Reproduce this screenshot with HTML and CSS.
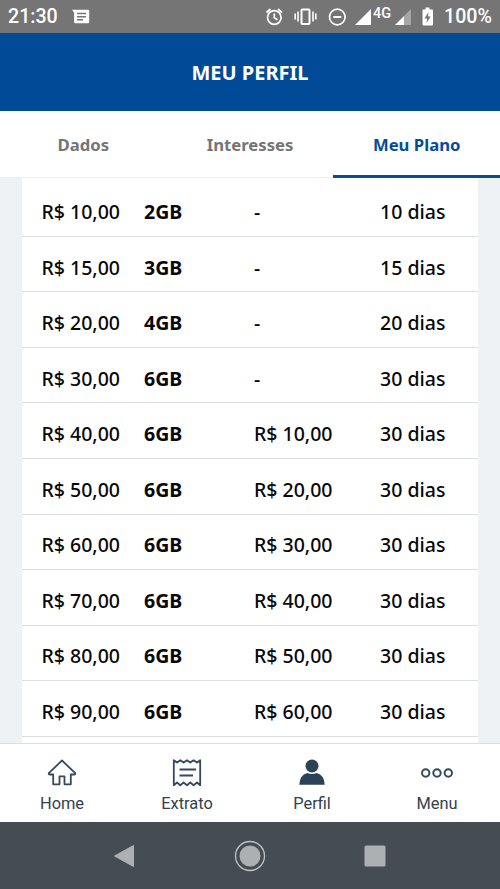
FILE: index.html
```html
<!DOCTYPE html>
<html lang="pt-BR">
<head>
<meta charset="utf-8">
<title>Meu Perfil</title>
<link rel="stylesheet" href="styles.css">
</head>
<body>
<div class="status">
  <span class="clock">21:30</span>
  <svg class="msg" width="18" height="16" viewBox="0 0 18 16"><path fill="#fff" d="M0 .7h16q1.200 0 1.200 1.200v11.200q0 1.200-1.200 1.200H3.300q-1.200 0-1.200-1.200V3.500z"/><path stroke="#757575" stroke-width="1.500" d="M5 4.500h9M5 7.700h9M5 10.800h6"/></svg>
  <svg class="icons" width="150" height="24" viewBox="0 0 150 24">
    <g fill="none" stroke="#fff" stroke-width="1.700">
      <circle cx="10.300" cy="12.500" r="6.800"/><path d="M2.500 7.500 6.500 4M18 7.500 14 4M10.300 8.500v4.300l3.200 2"/>
      <rect x="37.500" y="4.500" width="8" height="14.500" rx=".8" stroke-width="2"/><path d="M34 6.500v10M49 6.500v10M31.200 8.500v6M51.800 8.500v6" stroke-width="1.600"/>
      <circle cx="73.300" cy="12" r="7.800"/><path d="M69.300 12h8" stroke-width="2"/>
    </g>
    <path fill="#fff" d="M91 20 107 4v16zM131 20l9-9v9z"/><path fill="#a6a6a6" d="m140 11 7-7v16h-7z"/>
  </svg>
  <span class="net">4G</span>
  <svg class="battery" width="12" height="20" viewBox="0 0 12 20"><path fill="#fff" d="M3.500.5h4v2H10q1 0 1 1v14q0 1-1 1H1.500q-1 0-1-1v-14q0-1 1-1h2z"/><path fill="#757575" d="M6.500 5 2.500 11.500h2.700L4.500 16 8.700 9.500H6z"/></svg>
  <span class="pct">100%</span>
</div>
<header class="header">MEU PERFIL</header>
<nav class="tabs"><span class="tab">Dados</span><span class="tab">Interesses</span><span class="tab active">Meu Plano</span></nav>
<main class="content">
  <div class="list">
    <div class="row"><span>R$ 10,00</span><b>2GB</b><span>-</span><span>10 dias</span></div>
    <div class="row"><span>R$ 15,00</span><b>3GB</b><span>-</span><span>15 dias</span></div>
    <div class="row"><span>R$ 20,00</span><b>4GB</b><span>-</span><span>20 dias</span></div>
    <div class="row"><span>R$ 30,00</span><b>6GB</b><span>-</span><span>30 dias</span></div>
    <div class="row"><span>R$ 40,00</span><b>6GB</b><span>R$ 10,00</span><span>30 dias</span></div>
    <div class="row"><span>R$ 50,00</span><b>6GB</b><span>R$ 20,00</span><span>30 dias</span></div>
    <div class="row"><span>R$ 60,00</span><b>6GB</b><span>R$ 30,00</span><span>30 dias</span></div>
    <div class="row"><span>R$ 70,00</span><b>6GB</b><span>R$ 40,00</span><span>30 dias</span></div>
    <div class="row"><span>R$ 80,00</span><b>6GB</b><span>R$ 50,00</span><span>30 dias</span></div>
    <div class="row"><span>R$ 90,00</span><b>6GB</b><span>R$ 60,00</span><span>30 dias</span></div>
  </div>
</main>
<nav class="bottom">
  <div class="item"><svg width="32" height="30" viewBox="0 0 32 30"><path fill="none" stroke="#34495e" stroke-width="1.800" stroke-linejoin="round" d="M16 2.500 2.800 15.200q-.3 1.300 1 1.300h3.400v9.800h6.300v-8h5v8h6.300v-9.800h3.400q1.300 0 1-1.300z"/></svg><span>Home</span></div>
  <div class="item"><svg width="32" height="30" viewBox="0 0 32 30"><path fill="none" stroke="#34495e" stroke-width="1.800" stroke-linejoin="round" d="M2.800 2.200 6 4.500l3.300-2.300 3.300 2.300L16 2.200l3.300 2.300 3.300-2.300L26 4.500l3.200-2.300v25L26 24.500l-3.400 2.700-3.300-2.700-3.300 2.700-3.400-2.700-3.300 2.700L6 24.500l-3.200 2.700zM8.500 11.500H25M8.500 17.500H22"/></svg><span>Extrato</span></div>
  <div class="item"><svg width="32" height="30" viewBox="0 0 32 30"><g fill="#2c4257"><circle cx="16" cy="8" r="6.500"/><path d="M3.300 26.700q.2-9.500 8-11.700 4.700 2 9.400 0 7.800 2.200 8 11.700z"/></g></svg><span>Perfil</span></div>
  <div class="item"><svg width="32" height="30" viewBox="0 0 32 30"><g fill="none" stroke="#34495e" stroke-width="2"><circle cx="4.700" cy="15" r="3.700"/><circle cx="16" cy="15" r="3.700"/><circle cx="27.300" cy="15" r="3.700"/></g></svg><span>Menu</span></div>
</nav>
<div class="system">
  <svg width="32" height="32" viewBox="0 0 32 32"><path fill="#acb0b3" stroke="#acb0b3" stroke-linejoin="round" d="M5.500 16 24.500 5.500v21z"/></svg>
  <svg width="32" height="32" viewBox="0 0 32 32"><circle cx="16" cy="16" r="10.500" fill="#acb0b3"/><circle cx="16" cy="16" r="14.500" fill="none" stroke="#c1c4c6" stroke-width="1.300"/></svg>
  <svg width="32" height="32" viewBox="0 0 32 32"><rect x="5.500" y="5.500" width="21" height="21" rx="1.500" fill="#acb0b3"/></svg>
</div>
</body>
</html>
```
FILE: styles.css
```css
* { box-sizing: border-box; }
body { margin: 0; width: 500px; height: 889px; overflow: hidden; display: flex; flex-direction: column; background: #fff; font-family: "Noto Sans", sans-serif; }
.status { height: 33px; flex: none; background: #757575; color: #fff; font-family: Roboto, sans-serif; font-size: 19.600px; font-weight: 500; line-height: 34px; display: flex; padding-left: 8px; position: relative; }
.clock { width: 64px; }
.msg { margin-top: 9px; }
.icons { position: absolute; left: 264px; top: 5px; }
.net { position: absolute; left: 373px; top: 6px; font-size: 14.500px; line-height: 16px; font-weight: 500; }
.battery { position: absolute; left: 422px; top: 7px; }
.pct { position: absolute; left: 444px; top: 0; }
.header { height: 78px; flex: none; background: #004a98; color: #fff; font-size: 20px; font-weight: 700; line-height: 80px; text-align: center; }
.tabs { height: 67px; flex: none; display: flex; }
.tab { flex: 1; text-align: center; font-size: 16.700px; font-weight: 700; line-height: 68px; color: #757575; border-bottom: 1px solid #eceef0; }
.active { color: #084c98; border-bottom: 3px solid #084c98; }
.content { height: 565px; flex: none; background: #eff2f5; padding: 0 22px; overflow: hidden; }
.list { height: 565px; padding-top: 3.300px; background: #fff; }
.row { height: 55.550px; display: grid; grid-template-columns: 102.500px 110px 126px 1fr; align-items: center; padding: 6px 0 0 19.500px; border-bottom: 1px solid #dcdfe2; font-size: 19.500px; font-weight: 500; color: #080808; white-space: nowrap; }
.row b { font-weight: 700; }
.bottom { height: 79px; flex: none; border-top: 1px solid #dcdfe2; display: flex; color: #34414d; font-family: Roboto, sans-serif; font-size: 16.400px; line-height: 20px; }
.item { width: 125px; display: flex; flex-direction: column; align-items: center; gap: 6px; padding: 13.500px 1px 0 0; }
.system { flex: 1; background: #454d53; display: flex; justify-content: center; align-items: center; gap: 93px; }
```
